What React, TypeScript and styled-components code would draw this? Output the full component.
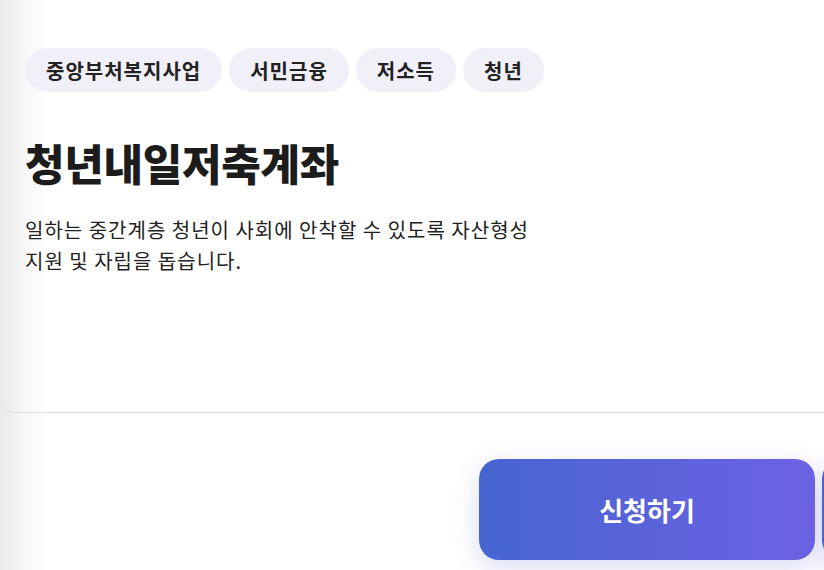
import React from 'react';
import styled, { createGlobalStyle } from 'styled-components';

const GlobalStyle = createGlobalStyle`
  html, body {
    margin: 0;
    padding: 0;
  }
  body {
    width: 824px;
    height: 570px;
    overflow: hidden;
    font-family: "Noto Sans CJK KR", "Noto Sans", sans-serif;
    color: #222;
    background: linear-gradient(90deg, #e9e9e9 0px, #f6f6f6 22px, #ffffff 46px);
  }
`;

// Detail card: tags, title and description
const Card = styled.section`
  height: 413px;
  box-sizing: border-box;
  padding: 48px 25px 0;
  border-bottom: 1px solid #dcdcdc;
  border-bottom-left-radius: 14px;
`;

const TagRow = styled.div`
  display: flex;
  gap: 7px;
`;

const Tag = styled.span`
  display: inline-flex;
  align-items: center;
  height: 44px;
  padding: 0 21px;
  border-radius: 22px;
  background: #f1f0f9;
  font-size: 20px;
  font-weight: 600;
  letter-spacing: 1px;
  color: #222;
`;

const Title = styled.h1`
  margin: 42px 0 0;
  font-size: 43px;
  line-height: 56px;
  font-weight: 800;
  letter-spacing: -0.3px;
  color: #1c1c1c;
`;

const Description = styled.p`
  margin: 24px 0 0;
  font-size: 20px;
  line-height: 31px;
  font-weight: 400;
  letter-spacing: 1px;
  color: #222;
`;

// Bottom action area; the second button runs past the right edge
const Footer = styled.div`
  display: flex;
  justify-content: flex-end;
  gap: 7px;
  padding-top: 46px;
  margin-right: -334px;
`;

const ActionButton = styled.button<{ $primary?: boolean }>`
  flex: 0 0 336px;
  height: 101px;
  border: none;
  border-radius: 20px;
  background: ${(p) =>
    p.$primary
      ? 'linear-gradient(90deg, #4565d0 0%, #5a63da 50%, #6d62e4 100%)'
      : 'linear-gradient(90deg, #4a63d0 0%, #6d62e4 100%)'};
  box-shadow: 0 8px 26px rgba(88, 92, 200, 0.22);
  color: #fff;
  font-family: inherit;
  font-size: 26px;
  font-weight: 700;
  letter-spacing: 0;
  cursor: pointer;
`;

export default function App() {
  const tags = ['중앙부처복지사업', '서민금융', '저소득', '청년'];

  return (
    <>
      <GlobalStyle />
      <Card>
        <TagRow>
          {tags.map((tag) => (
            <Tag key={tag}>{tag}</Tag>
          ))}
        </TagRow>
        <Title>청년내일저축계좌</Title>
        <Description>
          일하는 중간계층 청년이 사회에 안착할 수 있도록 자산형성
          <br />
          지원 및 자립을 돕습니다.
        </Description>
      </Card>
      <Footer>
        <ActionButton $primary>신청하기</ActionButton>
        <ActionButton aria-label="문의하기" />
      </Footer>
    </>
  );
}
